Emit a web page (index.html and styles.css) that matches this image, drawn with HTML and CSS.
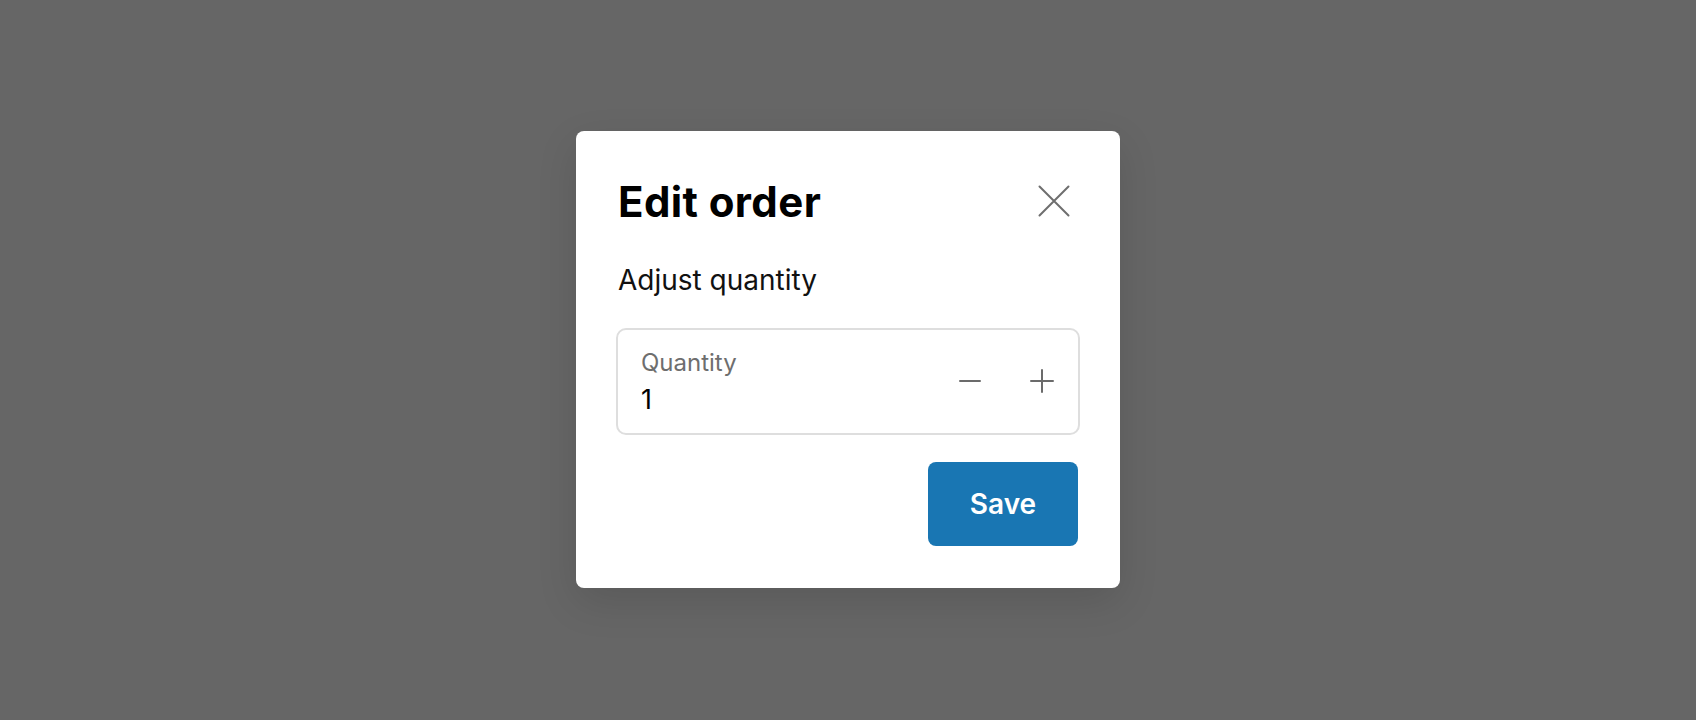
FILE: index.html
```html
<!DOCTYPE html>
<html lang="en">
<head>
<meta charset="utf-8">
<title>Edit order</title>
<link rel="stylesheet" href="styles.css">
</head>
<body>
<div class="overlay">
  <div class="dialog" role="dialog" aria-labelledby="dlg-title">
    <div class="dialog-header">
      <h1 class="dialog-title" id="dlg-title">Edit order</h1>
      <button class="icon-btn close-btn" aria-label="Close">
        <svg width="48" height="48" viewBox="0 0 48 48" fill="none" stroke="#6e6e6e" stroke-width="2" stroke-linecap="round"><path d="M9.5 9.5 L38.5 38.5 M38.5 9.5 L9.5 38.5"/></svg>
      </button>
    </div>
    <p class="dialog-desc">Adjust quantity</p>
    <div class="qty-field">
      <div class="qty-text">
        <span class="qty-label">Quantity</span>
        <span class="qty-value">1</span>
      </div>
      <div class="qty-actions">
        <button class="icon-btn" aria-label="Decrease">
          <svg width="24" height="24" viewBox="0 0 24 24" fill="none" stroke="#6b6b6b" stroke-width="2" stroke-linecap="round"><path d="M2 12 H22"/></svg>
        </button>
        <button class="icon-btn" aria-label="Increase">
          <svg width="24" height="24" viewBox="0 0 24 24" fill="none" stroke="#6b6b6b" stroke-width="2" stroke-linecap="round"><path d="M1 12 H23 M12 1 V23"/></svg>
        </button>
      </div>
    </div>
    <div class="dialog-footer">
      <button class="primary-btn">Save</button>
    </div>
  </div>
</div>
</body>
</html>
```

FILE: styles.css
```css
* { box-sizing: border-box; }
html, body { margin: 0; padding: 0; }
body {
  background: #666666;
  font-family: Inter, "Noto Sans", "Liberation Sans", sans-serif;
  color: #111111;
}
.overlay {
  width: 100vw;
  height: 100vh;
  display: flex;
  align-items: center;
  justify-content: center;
}
.dialog {
  width: 544px;
  background: #ffffff;
  border-radius: 8px;
  padding: 41px 40px 42px 40px;
  margin-bottom: 2px;
  box-shadow: 0 14px 40px rgba(0, 0, 0, 0.12);
}
.dialog-header {
  display: flex;
  justify-content: space-between;
  align-items: flex-start;
}
.dialog-title {
  margin: 5px 0 0 0;
  padding-left: 2px;
  font-size: 42px;
  line-height: 50px;
  font-weight: 700;
  color: #000000;
  letter-spacing: 0.4px;
}
.icon-btn {
  width: 48px;
  height: 48px;
  padding: 0;
  border: 0;
  background: transparent;
  display: flex;
  align-items: center;
  justify-content: center;
  cursor: pointer;
}
.close-btn {
  margin-top: 5px;
  margin-right: 2px;
}
.dialog-desc {
  margin: 36px 0 0 0;
  padding-left: 2px;
  font-size: 28px;
  line-height: 34px;
  font-weight: 400;
  color: #111111;
}
.qty-field {
  margin-top: 31px;
  height: 107px;
  border: 2px solid #dedede;
  border-radius: 10px;
  display: flex;
  align-items: center;
  justify-content: space-between;
  padding: 0 12px 0 23px;
}
.qty-text {
  display: flex;
  flex-direction: column;
  align-self: flex-start;
  padding-top: 19px;
}
.qty-label {
  font-size: 24px;
  line-height: 28px;
  color: #6e6e6e;
}
.qty-value {
  margin-top: 7px;
  font-size: 27px;
  line-height: 32px;
  color: #000000;
}
.qty-actions {
  display: flex;
  gap: 24px;
}
.dialog-footer {
  margin-top: 27px;
  display: flex;
  justify-content: flex-end;
}
.primary-btn {
  width: 150px;
  height: 84px;
  border: 0;
  border-radius: 8px;
  background: #1976b3;
  color: #ffffff;
  font-family: Inter, "Noto Sans", "Liberation Sans", sans-serif;
  font-size: 28px;
  font-weight: 600;
  cursor: pointer;
  margin-right: 2px;
}
```
